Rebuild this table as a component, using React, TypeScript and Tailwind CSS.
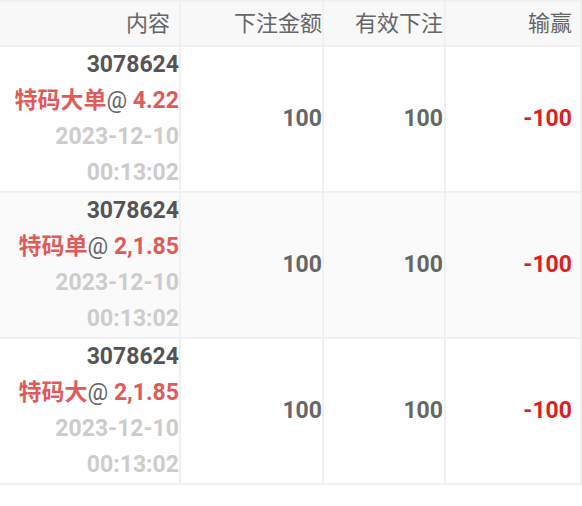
import React from "react";

type Row = {
  id: string;
  play: string;
  odds: string;
  date: string;
  time: string;
  amount: string;
  valid: string;
  win: string;
  striped: boolean;
};

const rows: Row[] = [
  { id: "3078624", play: "特码大单", odds: "4.22", date: "2023-12-10", time: "00:13:02", amount: "100", valid: "100", win: "-100", striped: false },
  { id: "3078624", play: "特码单", odds: "2,1.85", date: "2023-12-10", time: "00:13:02", amount: "100", valid: "100", win: "-100", striped: true },
  { id: "3078624", play: "特码大", odds: "2,1.85", date: "2023-12-10", time: "00:13:02", amount: "100", valid: "100", win: "-100", striped: false },
];

const font = { fontFamily: 'Roboto, "Noto Sans CJK SC", sans-serif' };

export default function App() {
  return (
    <div className="w-[582px] h-[506px] bg-white" style={font}>
      <div className="grid grid-cols-[181px_143px_122px_136px] border-t-2 border-[#f0f0f0]">
        <div className="h-[45px] bg-[#f8f8f8] border-r-2 border-b-2 border-[#f0f0f0] flex items-center justify-end pr-[9px] text-[22px] text-[#666]">内容</div>
        <div className="h-[45px] bg-[#f8f8f8] border-r-2 border-b-2 border-[#f0f0f0] flex items-center justify-end pr-[0px] text-[22px] text-[#666]">下注金额</div>
        <div className="h-[45px] bg-[#f8f8f8] border-r-2 border-b-2 border-[#f0f0f0] flex items-center justify-end pr-[1px] text-[22px] text-[#666]">有效下注</div>
        <div className="h-[45px] bg-[#f8f8f8] border-r-2 border-b-2 border-[#f0f0f0] flex items-center justify-end pr-[8px] text-[22px] text-[#666]">输赢</div>
        {rows.map((r, i) => (
          <React.Fragment key={i}>
            <div className={`h-[146px] border-r-2 border-b-2 border-[#f0f0f0] flex flex-col items-end justify-center pr-0 text-[23px] leading-[36px] font-bold ${r.striped ? "bg-[#fafafa]" : "bg-white"}`}>
              <div className="text-[#555]">{r.id}</div>
              <div>
                <span className="text-[#e05a5a]">{r.play}</span>
                <span className="text-[#666] font-normal">@ </span>
                <span className="text-[#e05a5a]">{r.odds}</span>
              </div>
              <div className="text-[#ccc]">{r.date}</div>
              <div className="text-[#ccc]">{r.time}</div>
            </div>
            <div className={`h-[146px] border-r-2 border-b-2 border-[#f0f0f0] flex items-center justify-end pr-0 text-[23px] font-bold text-[#666] ${r.striped ? "bg-[#fafafa]" : "bg-white"}`}>{r.amount}</div>
            <div className={`h-[146px] border-r-2 border-b-2 border-[#f0f0f0] flex items-center justify-end pr-[1px] text-[23px] font-bold text-[#666] ${r.striped ? "bg-[#fafafa]" : "bg-white"}`}>{r.valid}</div>
            <div className={`h-[146px] border-r-2 border-b-2 border-[#f0f0f0] flex items-center justify-end pr-[8px] text-[23px] font-bold text-[#dd1f1f] ${r.striped ? "bg-[#fafafa]" : "bg-white"}`}>{r.win}</div>
          </React.Fragment>
        ))}
      </div>
    </div>
  );
}
